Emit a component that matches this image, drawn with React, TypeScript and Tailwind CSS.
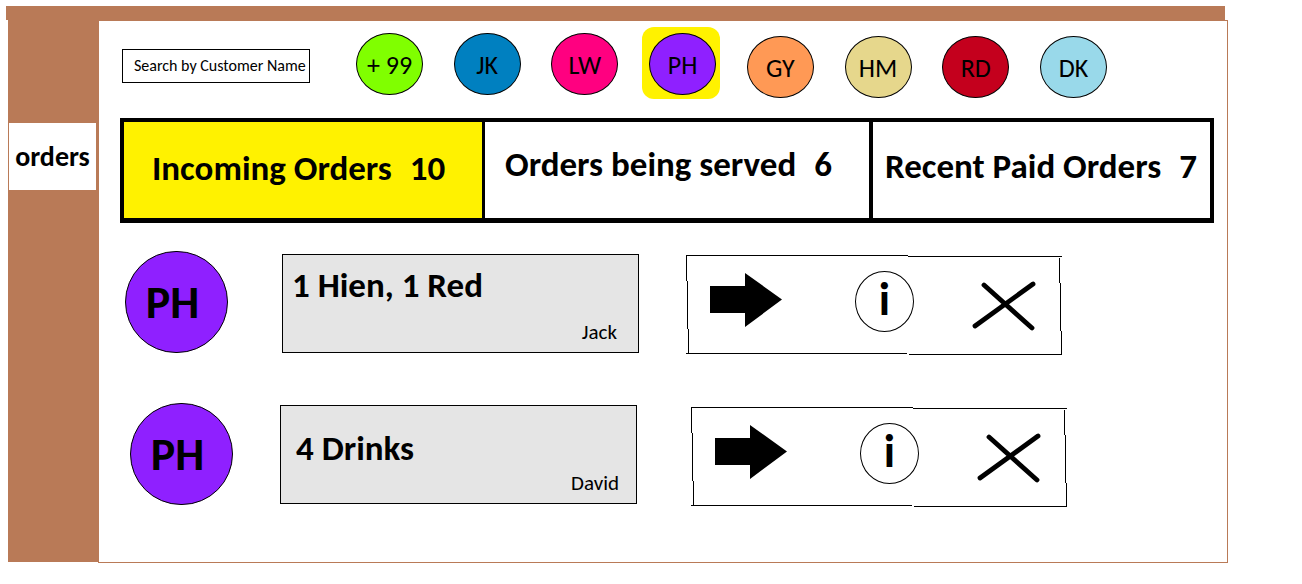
type Person = { initials: string; color: string; selected?: boolean };

const nearby: Person[] = [
  { initials: "+ 99", color: "bg-[#80ff00]" },
  { initials: "JK", color: "bg-[#0080c0]" },
  { initials: "LW", color: "bg-[#ff0080]" },
  { initials: "PH", color: "bg-[#8f20ff]", selected: true },
];

const others: Person[] = [
  { initials: "GY", color: "bg-[#ff9955]" },
  { initials: "HM", color: "bg-[#e6d78c]" },
  { initials: "RD", color: "bg-[#c4001d]" },
  { initials: "DK", color: "bg-[#99d9ea]" },
];

const tabs = [
  { label: "Incoming Orders", count: 10, style: "bg-[#fff200] pl-7 pb-1 border-r-[3px]" },
  { label: "Orders being served", count: 6, style: "bg-white pl-5 pb-3 border-r-4" },
  { label: "Recent Paid Orders", count: 7, style: "bg-white pl-3 pb-2" },
];

const orders = [
  {
    items: "1 Hien, 1 Red",
    customer: "Jack",
    row: "pl-[26px]",
    card: "ml-[54px] mt-[3px] pl-[9px] pr-[21px] pt-[10px]",
    actions: "ml-[47px]",
  },
  {
    items: "4 Drinks",
    customer: "David",
    row: "pl-[31px]",
    card: "ml-[47px] mt-[2px] pl-[15px] pr-[17px] pt-[22px]",
    actions: "ml-[54px]",
  },
];

function Chip({ person }: { person: Person }) {
  return (
    <button
      type="button"
      aria-pressed={!!person.selected}
      className={`flex h-[72px] w-[78px] rounded-xl pl-[7px] pt-[6px] ${person.selected ? "bg-[#fff200]" : ""}`}
    >
      <span
        className={`flex h-[62px] w-[67px] items-center justify-center rounded-[50%] border border-black pt-[2px] text-[26px] leading-none ${person.color}`}
      >
        {person.initials}
      </span>
    </button>
  );
}

function SketchFrame() {
  return (
    <svg
      aria-hidden="true"
      viewBox="0 0 376 100"
      preserveAspectRatio="none"
      className="pointer-events-none absolute inset-0 h-full w-full"
      fill="none"
      stroke="black"
      shapeRendering="crispEdges"
    >
      <path d="M0 .5H222M222 1.5H376M.5 0V26M1.5 26V74M2.5 74V98M0 98.5H221M223 99.5H376M373.5 3V28M374.5 28V76M375.5 76V100" />
    </svg>
  );
}

function Actions({ className }: { className: string }) {
  return (
    <div className={`relative mt-1 flex h-[100px] w-[376px] shrink-0 pl-6 ${className}`}>
      <SketchFrame />
      <button type="button" aria-label="Send order" className="mt-[18px] h-[54px] w-[72px]">
        <svg viewBox="0 0 72 54" className="h-full w-full" fill="black">
          <path d="M0 13H35V0L72 26.5L35 54V40H0Z" />
        </svg>
      </button>
      <button
        type="button"
        aria-label="Order information"
        className="ml-[73px] mt-4 flex h-[61px] w-[59px] justify-center rounded-[50%] border border-black pt-[5px] text-[46px] font-bold leading-[44px]"
      >
        i
      </button>
      <button type="button" aria-label="Cancel order" className="ml-[58px] mt-[26px] h-[50px] w-[64px]">
        <svg viewBox="0 0 64 50" className="h-full w-full" fill="none" stroke="black" strokeWidth="4.8" strokeLinecap="round">
          <path d="M12 4L60 47M61 3L3 45" />
        </svg>
      </button>
    </div>
  );
}

export default function App() {
  return (
    <div className="min-h-screen bg-white pt-[6px] font-[Carlito,Lato,sans-serif] text-black">
      <header className="pl-[6px] pr-[77px]">
        <div className="h-[14px] bg-[#b97a57]" />
      </header>
      <div className="flex pl-2 pr-[74px]">
        <nav className="mb-px w-[90px] shrink-0 bg-[#b97a57] pl-px pr-[2px] pt-[103px]">
          <a href="#orders" className="flex h-[67px] items-center justify-center bg-white text-[28px] font-bold">
            orders
          </a>
        </nav>
        <main className="min-w-0 flex-1 border border-[#b97a57] pb-[55px]">
          <div className="flex h-[97px] items-start pl-[23px]">
            <input
              type="text"
              aria-label="Search by Customer Name"
              placeholder="Search by Customer Name"
              className="mt-7 h-[34px] w-[188px] shrink-0 border border-black pb-[2px] pl-[11px] text-base placeholder:text-black focus:outline-none"
            />
            <div className="ml-[39px] mr-[116px] flex flex-1 justify-between pt-[6px]">
              {nearby.map((p) => (
                <Chip key={p.initials} person={p} />
              ))}
              {others.map((p) => (
                <div key={p.initials} className="pt-[3px]">
                  <Chip person={p} />
                </div>
              ))}
            </div>
          </div>
          <div className="ml-[21px] mr-[13px] grid h-[105px] grid-cols-[361fr_388fr_337fr] border-4 border-b-[5px] border-black">
            {tabs.map((t) => (
              <button
                key={t.label}
                type="button"
                className={`flex items-center gap-[18px] whitespace-nowrap border-black text-[35px] font-bold ${t.style}`}
              >
                <span>{t.label}</span>
                <span>{t.count}</span>
              </button>
            ))}
          </div>
          <ul className="mt-7 flex flex-col gap-12">
            {orders.map((o) => (
              <li key={o.items} className={`flex items-start ${o.row}`}>
                <div className="flex h-[102px] w-[103px] shrink-0 items-center justify-center rounded-full border border-black bg-[#8f20ff] pr-2 text-[46px] font-bold leading-none">
                  PH
                </div>
                <div
                  className={`flex h-[99px] w-[357px] shrink-0 flex-col justify-between border border-black bg-[#e5e5e5] pb-2 ${o.card}`}
                >
                  <h2 className="text-[35px] font-bold leading-10">{o.items}</h2>
                  <p className="text-right text-[21px] leading-6">{o.customer}</p>
                </div>
                <Actions className={o.actions} />
              </li>
            ))}
          </ul>
        </main>
      </div>
    </div>
  );
}
